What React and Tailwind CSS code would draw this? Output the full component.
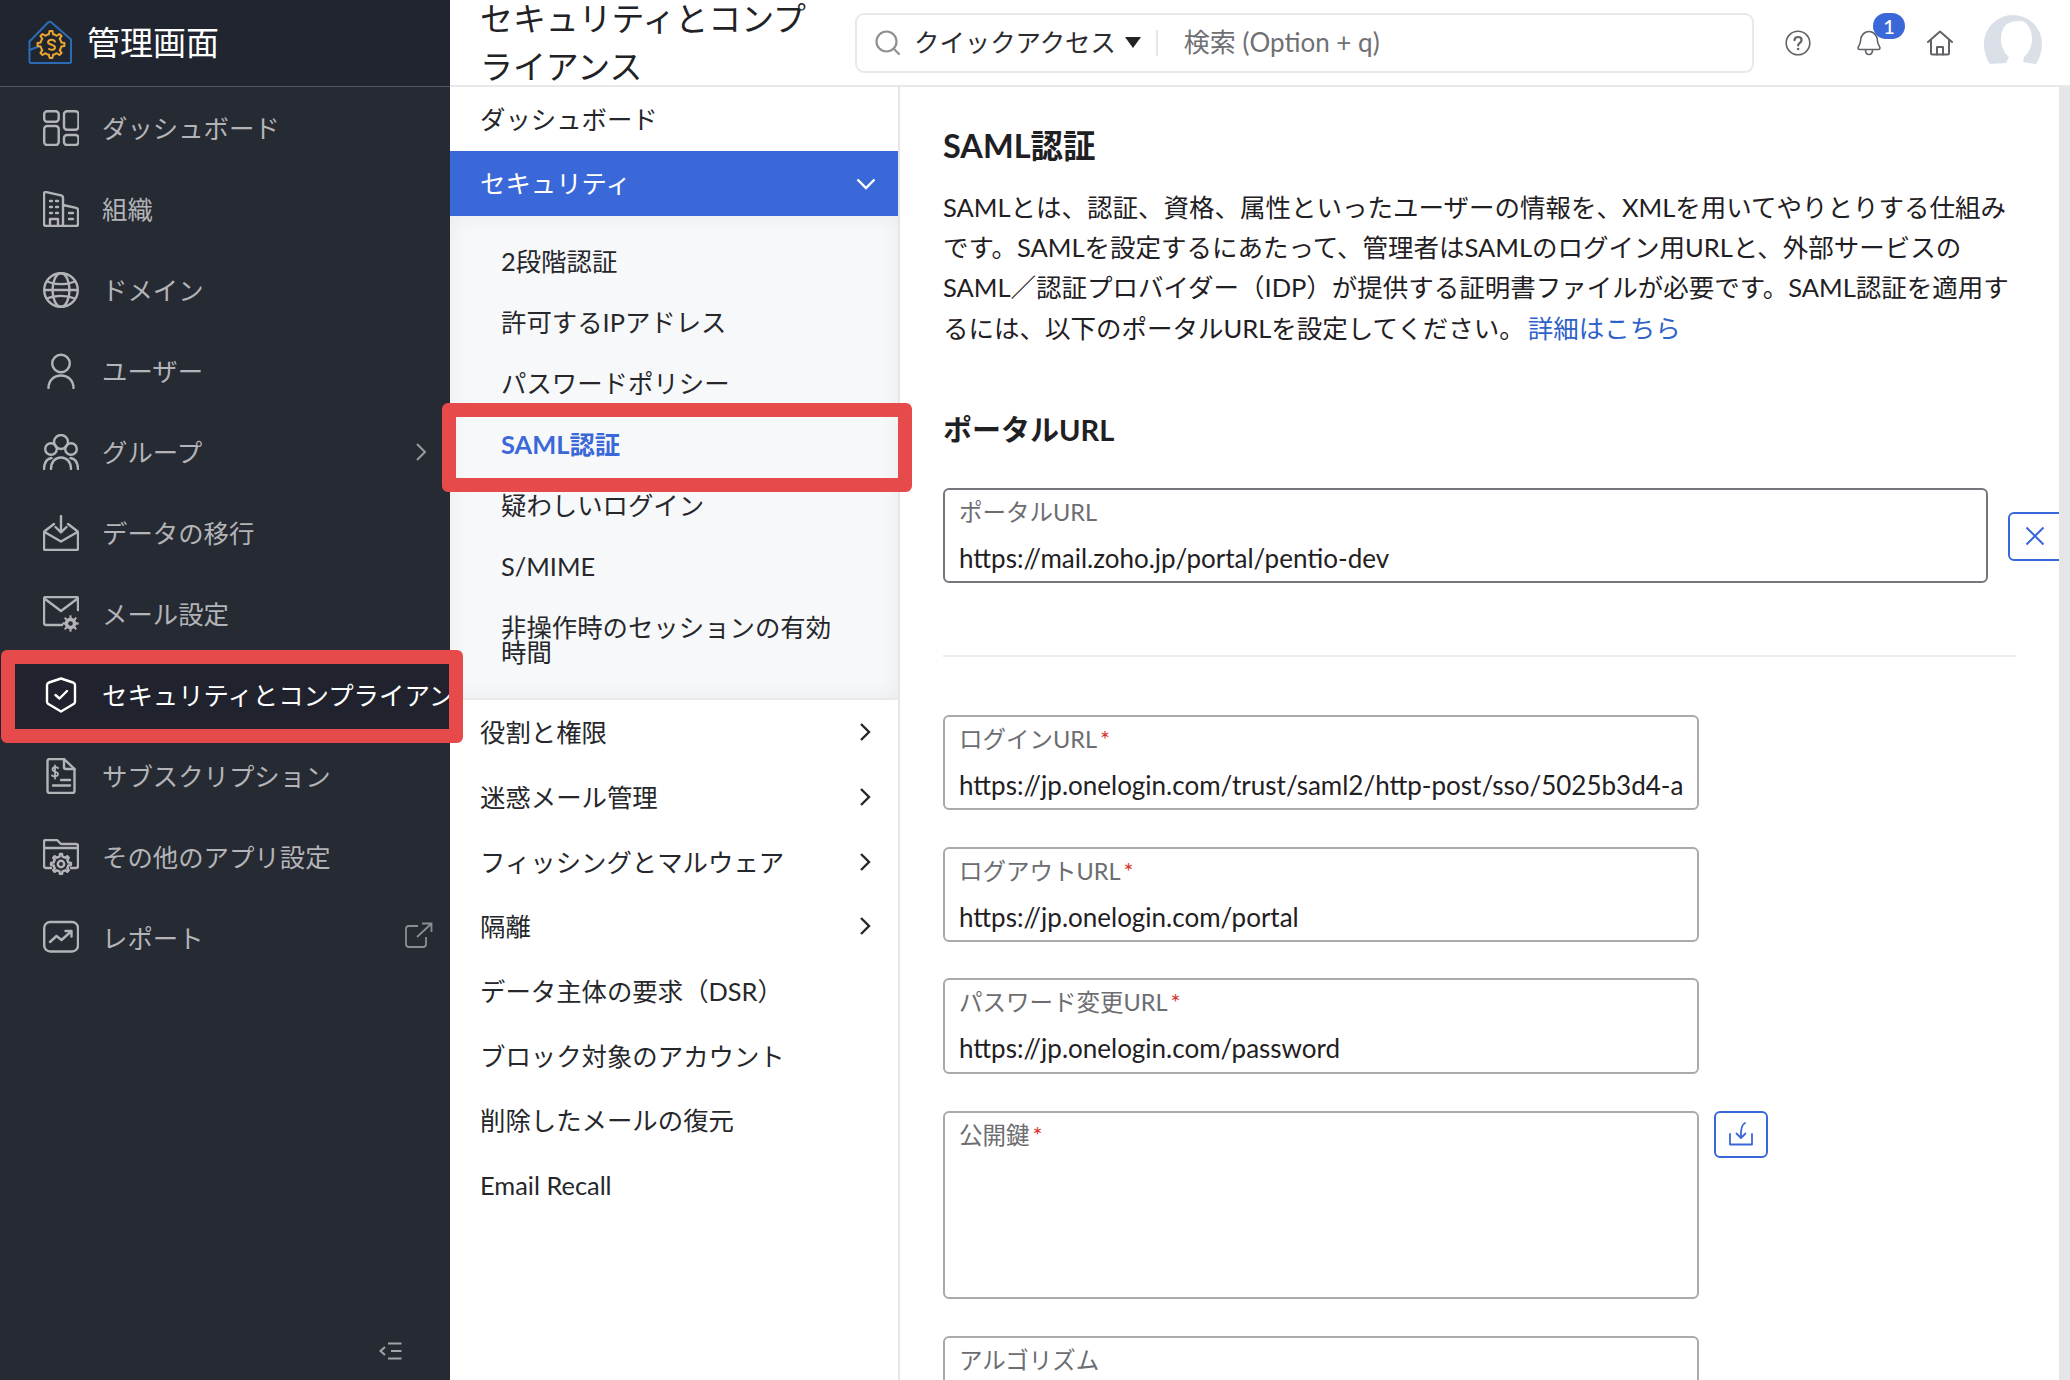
import React from 'react'

// gear outline used by the logo and the small settings icons
const gearPath = (cx, cy, r1, r2, teeth) => {
  const pts = []
  const step = (Math.PI * 2) / teeth
  for (let i = 0; i < teeth; i++) {
    const a = i * step
    const list = [
      [r1, a - step * 0.5],
      [r1, a - step * 0.25],
      [r2, a - step * 0.14],
      [r2, a + step * 0.14],
      [r1, a + step * 0.25],
    ]
    list.forEach(([r, t]) => pts.push(`${(cx + r * Math.cos(t)).toFixed(2)} ${(cy + r * Math.sin(t)).toFixed(2)}`))
  }
  return `M${pts.join('L')}Z`
}

const Svg = ({ children, size = 36, className = '', box }) => (
  <svg
    width={size}
    height={size}
    viewBox={box || `0 0 ${size} ${size}`}
    fill="none"
    stroke="currentColor"
    strokeWidth="2.4"
    strokeLinecap="round"
    strokeLinejoin="round"
    className={`shrink-0 ${className}`}
  >
    {children}
  </svg>
)

const icons = {
  dashboard: (
    <Svg>
      <rect x="1.2" y="1.2" width="14.5" height="10.5" rx="3" />
      <rect x="21" y="1.2" width="14.5" height="18.5" rx="3" />
      <rect x="1.2" y="16" width="14.5" height="19" rx="3" />
      <rect x="21" y="25" width="14.5" height="10" rx="3" />
    </Svg>
  ),
  org: (
    <Svg>
      <path d="M20 35H3a2 2 0 0 1-2-2V3c0-1.4.8-2.2 2.2-1.9L18 4.4c1.300.3 2 1 2 2.300V35h13a2 2 0 0 0 2-2V19c0-1.200-.7-1.900-1.800-2.100L20 14" />
      <path d="M7 10h2M13 10h2M7 16h2M13 16h2M7 22h2M13 22h2M26 22h4M26 28h4" />
      <path d="M7 35v-7h8v7" />
    </Svg>
  ),
  globe: (
    <Svg>
      <circle cx="18" cy="18" r="16.800" />
      <ellipse cx="18" cy="18" rx="8.500" ry="16.800" />
      <path d="M1.500 18h33M4 9.500c8 3.500 20 3.500 28 0M4 26.500c8-3.500 20-3.500 28 0" />
    </Svg>
  ),
  user: (
    <Svg>
      <circle cx="18" cy="10.500" r="8.800" />
      <path d="M5.500 35c0-7.500 5.500-12.500 12.500-12.500S30.500 27.500 30.500 35" />
    </Svg>
  ),
  group: (
    <Svg>
      <circle cx="18" cy="8" r="7" />
      <circle cx="8" cy="15" r="5.800" />
      <circle cx="28" cy="15" r="5.800" />
      <path d="M8 35c0-7 4-11.500 10-11.500S28 28 28 35" />
      <path d="M1 35c0-6 2.500-10 7.500-11M35 35c0-6-2.500-10-7.500-11" />
    </Svg>
  ),
  migrate: (
    <Svg>
      <path d="M11 9 2.500 15.500c-1 .8-1.500 1.500-1.500 2.500v15.500a1.500 1.500 0 0 0 1.500 1.500h31a1.500 1.500 0 0 0 1.500-1.500V18c0-1-.5-1.700-1.500-2.500L25 9" />
      <path d="m1.500 17 16.500 9.500L34.500 17" />
      <path d="M18 1v16M12.500 12l5.500 5.500 5.500-5.500" />
    </Svg>
  ),
  mail: (
    <Svg>
      <path d="M19 29H3a2 2 0 0 1-2-2V3a2 2 0 0 1 2-2h30a2 2 0 0 1 2 2v11" />
      <path d="m2 3 16 12L34 3" />
      <path d={gearPath(27.5, 27.5, 5.8, 8.3, 8)} fill="currentColor" stroke="none" />
      <circle cx="27.500" cy="27.500" r="2.300" fill="#262a33" stroke="none" />
    </Svg>
  ),
  shield: (
    <Svg>
      <path d="M18 1.500 30 5.500Q32 6.200 32 8V24.500Q32 26 31 26.800L18 34.500 5 26.800Q4 26 4 24.500V8Q4 6.200 6 5.500Z" />
      <path d="m12.500 18 4 3.500L24 14" />
    </Svg>
  ),
  billing: (
    <Svg>
      <path d="M21 1H6.500a2 2 0 0 0-2 2v30a2 2 0 0 0 2 2h23a2 2 0 0 0 2-2V11Z" />
      <path d="M21 1v8a2 2 0 0 0 2 2h8.500" />
      <path d="M15 10c-1-1-5.500-1.500-5.500 1.500 0 3 5.500 1.500 5.500 4.500s-5 2.500-6 1.500M12 7.500v13" strokeWidth="1.800" />
      <path d="M18 22h9M10 27.500h17" />
    </Svg>
  ),
  apps: (
    <Svg>
      <path d="M8 29H3a2 2 0 0 1-2-2V3a2 2 0 0 1 2-2h11l4 4h15a2 2 0 0 1 2 2v20a2 2 0 0 1-2 2h-5" />
      <path d="M1 9h34" />
      <path d={gearPath(18, 25, 7.5, 10, 8)} />
      <circle cx="18" cy="25" r="3.200" />
    </Svg>
  ),
  report: (
    <Svg>
      <rect x="1.200" y="2" width="33.800" height="29.500" rx="6" />
      <path d="m7 22 6.500-6 5 4 9.500-8.500M22.500 11h6v5.500" />
    </Svg>
  ),
}

const sideItems = [
  { label: 'ダッシュボード', icon: 'dashboard' },
  { label: '組織', icon: 'org' },
  { label: 'ドメイン', icon: 'globe' },
  { label: 'ユーザー', icon: 'user' },
  { label: 'グループ', icon: 'group', arrow: true },
  { label: 'データの移行', icon: 'migrate' },
  { label: 'メール設定', icon: 'mail' },
  { label: 'セキュリティとコンプライアンス', icon: 'shield', active: true },
  { label: 'サブスクリプション', icon: 'billing' },
  { label: 'その他のアプリ設定', icon: 'apps' },
  { label: 'レポート', icon: 'report', external: true },
]

const subItems = ['2段階認証', '許可するIPアドレス', 'パスワードポリシー', 'SAML認証', '疑わしいログイン', 'S/MIME']

const lowerItems = [
  { label: '役割と権限', arrow: true },
  { label: '迷惑メール管理', arrow: true },
  { label: 'フィッシングとマルウェア', arrow: true },
  { label: '隔離', arrow: true },
  { label: 'データ主体の要求（DSR）' },
  { label: 'ブロック対象のアカウント' },
  { label: '削除したメールの復元' },
  { label: 'Email Recall' },
]

const Logo = () => (
  <svg width="46" height="46" viewBox="0 0 46 46" fill="none" strokeLinecap="round" strokeLinejoin="round" className="shrink-0">
    <path
      d="M1.500 21.500 20 2.500c1-1 2.200-1 3.200-.2L43 19.500v22a1.500 1.500 0 0 1-1.500 1.500H3a1.500 1.500 0 0 1-1.500-1.500V30L12 26"
      stroke="#2b6cb5"
      strokeWidth="2"
    />
    <path d="M1.500 21.500V30" stroke="#2b6cb5" strokeWidth="2" />
    <path d={gearPath(23, 24.5, 10.5, 13.5, 8)} stroke="#e9a72f" strokeWidth="2" fill="#21252f" />
    <path d="M27 21.500c-1.500-2.500-6-2.500-7 .5-.8 2.500 7 2.500 7 5.500 0 2.500-3.500 3-6 1.500" stroke="#e9a72f" strokeWidth="2" />
  </svg>
)

const Sidebar = () => (
  <aside className="flex h-full w-[450px] shrink-0 flex-col bg-[#262a33]">
    <div className="flex h-[87px] shrink-0 items-center gap-[13px] border-b border-[#55585e] bg-[#21252f] pl-[28px] text-[33px] text-white">
      <Logo />
      <span>管理画面</span>
    </div>
    <nav className="flex-1">
      {sideItems.map((item) => (
        <div
          key={item.label}
          className={`flex h-[81px] items-center overflow-hidden pl-[43px] text-[25.4px] ${
            item.active ? 'bg-[#20232d] text-white' : 'text-[#b3b4b7]'
          }`}
        >
          <span className="flex w-[59px] shrink-0">{icons[item.icon]}</span>
          <span className="whitespace-nowrap pt-[2px]">{item.label}</span>
          {item.arrow && (
            <svg width="12" height="20" viewBox="0 0 12 20" fill="none" stroke="#9a9b9f" strokeWidth="2" className="ml-auto mr-[23px]">
              <path d="m2 2 8 8-8 8" />
            </svg>
          )}
          {item.external && (
            <svg width="28" height="26" viewBox="0 0 28 26" fill="none" stroke="#8c8d91" strokeWidth="1.800" className="mb-[6px] ml-auto mr-[17px]">
              <path d="M13 4H4a3 3 0 0 0-3 3v15a3 3 0 0 0 3 3h14a3 3 0 0 0 3-3v-7" />
              <path d="M12 15 26 2M17 1.500h9.500V10" />
            </svg>
          )}
        </div>
      ))}
    </nav>
    <div className="flex h-[38px] items-start justify-end pr-[48px]">
      <svg width="23" height="18" viewBox="0 0 23 18" fill="none" stroke="#a3a4a8" strokeWidth="2">
        <path d="M6 5 1.500 9 6 13M9 1.500h13.500M12 9h10.500M9 16.500h13.500" />
      </svg>
    </div>
  </aside>
)

const Header = () => (
  <header className="flex h-[87px] shrink-0 items-center overflow-hidden border-b-2 border-[#e8e8e9] bg-white">
    <div className="flex w-[405px] shrink-0 pl-[30px] pr-[40px] text-[32.9px] leading-[48px] text-[#212226]">
      セキュリティとコンプライアンス
    </div>
    <div className="flex h-[60px] w-[899px] shrink-0 items-center rounded-[9px] border-2 border-[#e9e9ea] text-[25.4px]">
      <svg width="28" height="28" viewBox="0 0 28 28" fill="none" stroke="#8f9092" strokeWidth="2.200" strokeLinecap="round" className="ml-[17px]">
        <circle cx="12.500" cy="12.500" r="10" />
        <path d="m20 20 5 5" />
      </svg>
      <span className="ml-[12px] whitespace-nowrap text-[#2a2b2f]">クイックアクセス</span>
      <span className="ml-[9px] h-0 w-0 border-x-[8px] border-t-[11px] border-x-transparent border-t-[#222327]" />
      <span className="ml-[15px] h-[26px] w-[2px] bg-[#e6e6e7]" />
      <span className="ml-[26px] whitespace-nowrap text-[26px] text-[#6f7074]">検索 (Option + q)</span>
    </div>
    <svg width="26" height="26" viewBox="0 0 26 26" fill="none" stroke="#626367" strokeWidth="1.600" strokeLinecap="round" className="ml-[31px] shrink-0">
      <circle cx="13" cy="13" r="11.800" />
      <path d="M9.500 10.200c.2-2.200 1.700-3.200 3.600-3.200 2.100 0 3.500 1.200 3.500 3 0 2.800-3.500 2.800-3.500 5.500" strokeWidth="2.200" />
      <circle cx="13.100" cy="19" r="1.300" fill="#626367" stroke="none" />
    </svg>
    <div className="relative ml-[45px] h-[26px] w-[26px] shrink-0">
      <svg width="24" height="26" viewBox="0 0 24 26" fill="none" stroke="#626367" strokeWidth="1.600" strokeLinecap="round" strokeLinejoin="round" className="absolute left-[1px] top-[0px]">
        <path d="M3.500 11c0-5 3.500-9.500 8.500-9.500s8.500 4.500 8.500 9.500c0 3.500 2.500 5.500 2.500 7 0 1-.7 1.500-1.500 1.500h-19c-.8 0-1.500-.5-1.500-1.500 0-1.500 2.500-3.500 2.500-7Z" />
        <path d="M8.500 20c0 3 1.500 4.500 3.500 4.500s3.500-1.500 3.500-4.500" />
      </svg>
      <span className="absolute left-[17px] top-[-17px] flex h-[26px] w-[32px] items-center justify-center rounded-full bg-[#3b68d8] text-[20px] font-medium text-white">
        1
      </span>
    </div>
    <svg width="26" height="26" viewBox="0 0 26 26" fill="none" stroke="#626367" strokeWidth="2" strokeLinecap="round" strokeLinejoin="round" className="ml-[45px] shrink-0">
      <path d="M1 12 13 1.500 25 12" />
      <path d="M4 10v13a1.500 1.500 0 0 0 1.500 1.500h15A1.500 1.500 0 0 0 22 23V10" />
      <path d="M10 24.500V17h6v7.500" />
    </svg>
    <svg width="58" height="50" viewBox="0 0 58 50" className="ml-[31px] mt-[-5px] shrink-0">
      <path d="M6 49C2 44 0 36 0 29 0 13 13 0 29 0s29 13 29 29c0 7-2 14-6 20l-13-2 1-5c5-4 8-11 8-18 0-9-5-18-11-18h-1c-6 0-10 1-13 3-4 3-6 9-6 15 0 7 3 14 8 18l-3 6Z" fill="#dbe0e8" />
    </svg>
  </header>
)

const MidColumn = () => (
  <div className="flex h-full w-[450px] shrink-0 flex-col border-r-2 border-[#e6e6e7] bg-white text-[25.4px] text-[#26272b]">
    <div className="flex h-[64px] shrink-0 items-center pl-[30px]">ダッシュボード</div>
    <div className="flex h-[65px] shrink-0 items-center justify-between bg-[#3b68d8] pl-[30px] pr-[22px] text-white">
      セキュリティ
      <svg width="20" height="12" viewBox="0 0 20 12" fill="none" stroke="#fff" strokeWidth="2.400">
        <path d="m1.500 1.500 8.500 8.500 8.500-8.500" />
      </svg>
    </div>
    <div className="shrink-0 border-b-2 border-[#e9e9ea] bg-[#f7f8fa] pb-[15px] pl-[51px] pr-[50px] pt-[15px] shadow-[inset_0_0_22px_rgba(0,0,0,0.06)]">
      {subItems.map((s) => (
        <div key={s} className={`flex h-[61px] items-center ${s === 'SAML認証' ? 'font-bold text-[#3b68d8]' : ''}`}>
          {s}
        </div>
      ))}
      <div className="py-[18px] leading-[25px]">非操作時のセッションの有効時間</div>
    </div>
    {lowerItems.map((item) => (
      <div key={item.label} className="flex h-[64.7px] shrink-0 items-center justify-between pl-[30px] pr-[27px]">
        {item.label}
        {item.arrow && (
          <svg width="12" height="20" viewBox="0 0 12 20" fill="none" stroke="#26272b" strokeWidth="2.400">
            <path d="m2 2 8 8-8 8" />
          </svg>
        )}
      </div>
    ))}
  </div>
)

const Field = ({ label, value, required, dark, className = '' }) => (
  <div
    className={`shrink-0 rounded-[6px] border-2 px-[14px] pt-[7px] ${dark ? 'border-[#76777c]' : 'border-[#a9aaae]'} ${className}`}
  >
    <div className="text-[23.5px] leading-[30px] text-[#6c6d71]">
      {label}
      {required && <span className="ml-[3px] text-[#d8322c]">*</span>}
    </div>
    {value && <div className="mt-[16px] overflow-hidden whitespace-nowrap text-[26px] leading-[30px] text-[#1f2023]">{value}</div>}
  </div>
)

const Main = () => (
  <div className="flex min-w-0 flex-1 overflow-hidden bg-white">
    <main className="min-w-0 flex-1 overflow-hidden pl-[43px] text-[#1f2023]">
      <h2 className="mt-[39px] text-[32.5px] font-bold leading-[40px]">SAML認証</h2>
      <p className="mt-[21px] w-[1075px] text-[25.5px] leading-[40.2px]">
        SAMLとは、認証、資格、属性といったユーザーの情報を、XMLを用いてやりとりする仕組みです。SAMLを設定するにあたって、管理者はSAMLのログイン用URLと、外部サービスのSAML／認証プロバイダー（IDP）が提供する証明書ファイルが必要です。SAML認証を適用するには、以下のポータルURLを設定してください。
        <a className="ml-[3px] text-[#2f62c9]">詳細はこちら</a>
      </p>
      <h2 className="mt-[62px] text-[29px] font-bold leading-[40px]">ポータルURL</h2>
      <div className="mt-[38px] flex items-center">
        <Field className="h-[95px] w-[1045px]" dark label="ポータルURL" value="https://mail.zoho.jp/portal/pentio-dev" />
        <button className="ml-[20px] mt-[2px] flex h-[49px] w-[60px] shrink-0 items-center rounded-[6px] border-2 border-[#3b68d8] pl-[15px] text-[#3b68d8]">
          <svg width="20" height="20" viewBox="0 0 20 20" fill="none" stroke="currentColor" strokeWidth="2">
            <path d="m1.500 1.500 17 17M18.500 1.500l-17 17" />
          </svg>
        </button>
      </div>
      <div className="mt-[72px] h-[2px] w-[1073px] bg-[#ececed]" />
      <Field className="mt-[58px] h-[95px] w-[756px]" required label="ログインURL" value="https://jp.onelogin.com/trust/saml2/http-post/sso/5025b3d4-a" />
      <Field className="mt-[37px] h-[95px] w-[756px]" required label="ログアウトURL" value="https://jp.onelogin.com/portal" />
      <Field className="mt-[36px] h-[96px] w-[756px]" required label="パスワード変更URL" value="https://jp.onelogin.com/password" />
      <div className="mt-[37px] flex items-start gap-[15px]">
        <Field className="h-[188px] w-[756px]" required label="公開鍵" />
        <button className="flex h-[47px] w-[54px] shrink-0 items-center justify-center rounded-[6px] border-2 border-[#3b68d8] text-[#3b68d8]">
          <svg width="26" height="26" viewBox="0 0 26 26" fill="none" stroke="currentColor" strokeWidth="1.800" strokeLinecap="round" strokeLinejoin="round">
            <path d="M2 13v10.500h22V13" />
            <path d="M17 2c-3 1.500-4.500 5-4 14M8.500 12.500l4.500 4.500 4.500-4.500" />
          </svg>
        </button>
      </div>
      <Field className="mt-[37px] h-[95px] w-[756px]" label="アルゴリズム" />
    </main>
    <div className="w-[11px] shrink-0 bg-[#e5e6e8]" />
  </div>
)

export default function App() {
  return (
    <div className="relative flex h-[1380px] w-[2070px] overflow-hidden bg-white font-['Lato','Noto_Sans_CJK_JP',sans-serif]">
      <Sidebar />
      <div className="flex min-w-0 flex-1 flex-col">
        <Header />
        <div className="flex min-h-0 flex-1">
          <MidColumn />
          <Main />
        </div>
      </div>
      {/* red annotation boxes drawn over the screenshot */}
      <div className="absolute left-[1px] top-[650px] h-[93px] w-[462px] rounded-[6px] border-[14px] border-[#e74a4b]" />
      <div className="absolute left-[442px] top-[403px] h-[89px] w-[470px] rounded-[6px] border-[14px] border-[#e74a4b]" />
    </div>
  )
}
